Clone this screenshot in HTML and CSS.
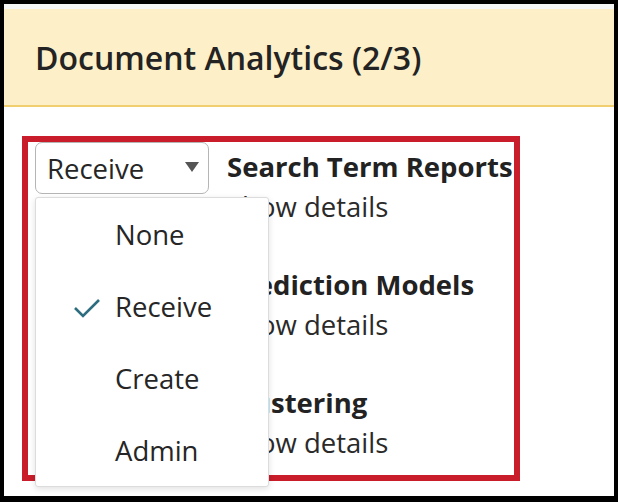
FILE: index.html
```html
<!DOCTYPE html>
<html lang="en">
	<head>
		<meta charset="UTF-8" />
		<meta name="viewport" content="width=device-width, initial-scale=1.0" />
		<title>Document Analytics</title>
		<link rel="stylesheet" href="styles.css">
	</head>

	<body>
		<div class="frame">
			<div class="panel-top"></div>
			<div class="panel-header">
				<h2 class="panel-title">Document Analytics (2/3)</h2>
			</div>
			<div class="panel-body">
				<div class="highlight">
					<div class="role-select">
						<div class="select-box">
							<span class="select-value">Receive</span>
							<span class="select-caret"></span>
						</div>
						<div class="select-menu">
							<div class="menu-item">None</div>
							<div class="menu-item selected">
								<svg class="check" viewBox="0 0 28 20" width="28" height="20">
									<path d="M2 10 L10 18 L26 2" fill="none" stroke="#2c6e80" stroke-width="2.6" />
								</svg>
								Receive
							</div>
							<div class="menu-item">Create</div>
							<div class="menu-item">Admin</div>
						</div>
					</div>
					<div class="features">
						<div class="feature">
							<div class="feature-name">Search Term Reports</div>
							<div class="feature-link">Show details</div>
						</div>
						<div class="feature">
							<div class="feature-name">Prediction Models</div>
							<div class="feature-link">Show details</div>
						</div>
						<div class="feature">
							<div class="feature-name">Clustering</div>
							<div class="feature-link">Show details</div>
						</div>
					</div>
				</div>
			</div>
		</div>
	</body>
</html>
```

FILE: styles.css
```css
* {
	box-sizing: border-box;
}

body {
	margin: 0;
	background: #000;
	padding: 4px 4px 6px 4px;
	height: 502px;
	font-family: 'Open Sans', 'Noto Sans', sans-serif;
	color: #262626;
}

.frame {
	background: #fff;
	height: 100%;
	overflow: hidden;
}

.panel-top {
	height: 5px;
	background: #f5f6f6;
}

.panel-header {
	height: 98px;
	background: #fdf0c9;
	border-bottom: 2px solid #f2cf6e;
	padding: 0 31px;
	display: flex;
	align-items: center;
}

.panel-title {
	margin: 0;
	font-size: 32px;
	font-weight: 600;
	color: #232323;
}

.panel-body {
	padding: 29px 0 0 18px;
}

.highlight {
	width: 498px;
	height: 345px;
	border: 6px solid #c91d2b;
	display: flex;
	gap: 18px;
	padding-left: 7px;
}

.role-select {
	position: relative;
	width: 174px;
	flex-shrink: 0;
}

.select-box {
	height: 52px;
	border: 1px solid #b5b5b5;
	border-radius: 7px;
	display: flex;
	align-items: center;
	justify-content: space-between;
	padding: 0 9px 0 11px;
	font-size: 27.5px;
}

.select-caret {
	width: 0;
	height: 0;
	border-left: 7.5px solid transparent;
	border-right: 7.5px solid transparent;
	border-top: 10px solid #555;
	margin-top: -2px;
}

.select-menu {
	position: absolute;
	left: 0;
	top: 55px;
	width: 234px;
	height: 290px;
	background: #fff;
	border: 1px solid #dcdcdc;
	border-radius: 3px;
	box-shadow: 0 2px 6px rgba(0, 0, 0, 0.12);
	padding-top: 1px;
	z-index: 2;
}

.menu-item {
	position: relative;
	height: 72px;
	line-height: 72px;
	padding-left: 79px;
	font-size: 27.5px;
}

.check {
	position: absolute;
	left: 37px;
	top: 27px;
}

.features {
	padding-top: 5px;
	white-space: nowrap;
}

.feature {
	margin-bottom: 38px;
}

.feature-name {
	font-size: 27.5px;
	font-weight: 700;
	line-height: 40px;
	color: #222;
}

.feature-link {
	font-size: 27.5px;
	line-height: 40px;
	color: #2a2a2a;
}
```
